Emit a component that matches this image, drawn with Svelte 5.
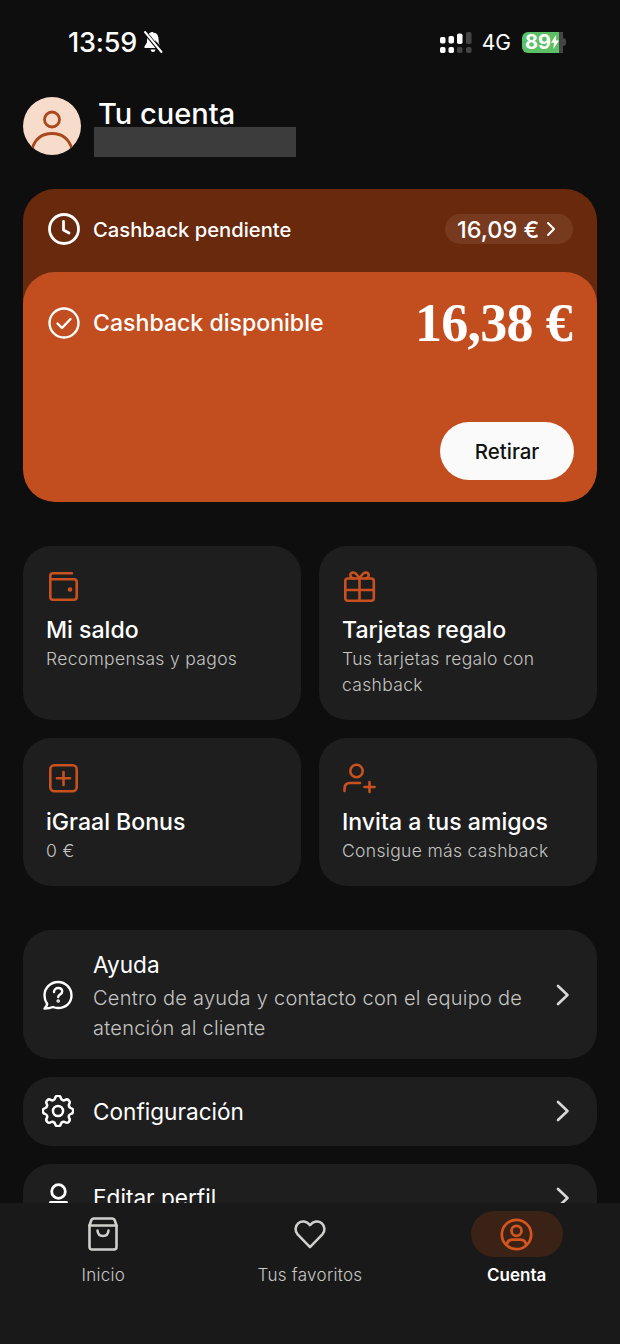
<script>
  const tiles = [
    { icon: 'wallet', title: 'Mi saldo', sub: 'Recompensas y pagos' },
    { icon: 'gift', title: 'Tarjetas regalo', sub: 'Tus tarjetas regalo con cashback' },
    { icon: 'bonus', title: 'iGraal Bonus', sub: '0 €' },
    { icon: 'invite', title: 'Invita a tus amigos', sub: 'Consigue más cashback' }
  ];
  const signal = [
    { x: 0, top: 5, end: 11.500, on: true, low: true },
    { x: 8.5, top: 4, end: 11.500, on: true, low: true },
    { x: 17, top: 1.500, end: 12, on: true, low: false },
    { x: 26, top: 0, end: 12, on: false, low: false }
  ];
</script>

{#snippet chevron()}
  <svg class="chev" width="16" height="24" viewBox="0 0 16 24" fill="none" stroke="#d8d8d6" stroke-width="2.6" stroke-linecap="round" stroke-linejoin="round"><path d="M3 3l9.5 9L3 21" /></svg>
{/snippet}

<div class="screen">
  <div class="scroll">
    <div class="status">
      <div class="status-left">
        <span class="time">13:59</span>
        <svg width="22" height="24" viewBox="0 0 22 24" fill="#fff"><path d="M11 2c-3.6 0-5.600 2.600-5.800 6l-.3 4.500L2.400 16.800c-.3.600 0 1.200.7 1.200H15z" /><path d="M8.500 19.500h5c-.3 1.700-1.300 2.500-2.500 2.500s-2.200-.8-2.500-2.500z" /><path d="M16.500 8.500l.4 5 1.500 2.500L8 4.500c1-1.200 4-2.500 6.200-1 1.500 1 2.200 3 2.300 5z" /><path d="M2.500 1.800l17 20.400" stroke="#0e0e0e" stroke-width="4" /><path d="M3 2l16.500 20" stroke="#fff" stroke-width="2" stroke-linecap="round" /></svg>
      </div>
      <div class="status-right">
        <svg width="32" height="21" viewBox="0 0 32 21">
          {#each signal as s}
            <rect x={s.x} y={s.top} width="5.500" height={s.end - s.top} rx="1.800" fill={s.on ? '#fff' : '#444'} />
            <rect x={s.x} y="15" width="5.500" height="6" rx="1.800" fill={s.low ? '#fff' : '#444'} />
          {/each}
        </svg>
        <span class="net">4G</span>
        <div class="battery">
          <div class="battery-body"><span>89</span><svg width="10" height="16" viewBox="0 0 10 18" fill="#fff"><path d="M6.500 0L0 10h3.800L2.800 18 10 7H6z" /></svg></div>
          <div class="battery-tip"></div>
        </div>
      </div>
    </div>

    <div class="header">
      <div class="avatar">
        <svg width="58" height="58" viewBox="0 0 58 58" fill="none" stroke="#a9481c" stroke-width="2.800"><circle cx="29" cy="22.500" r="7.500" /><path d="M9 52c3-10 10-15.500 20-15.500S46 42 49 52" /></svg>
      </div>
      <h1>Tu cuenta</h1>
      <div class="redacted"></div>
    </div>

    <div class="cashback">
      <div class="pending">
        <svg width="32" height="32" viewBox="0 0 32 32" fill="none" stroke="#fff" stroke-width="2.800" stroke-linecap="round" stroke-linejoin="round"><circle cx="16" cy="16" r="14.500" /><path d="M15.500 8.500v8.500l5.500 3" /></svg>
        <span class="cash-label">Cashback pendiente</span>
        <div class="pill">16,09 €
          <svg width="12" height="16" viewBox="0 0 12 16" fill="none" stroke="#fff" stroke-width="2" stroke-linecap="round" stroke-linejoin="round"><path d="M3 2l6 6-6 6" /></svg>
        </div>
      </div>
      <div class="available">
        <div class="available-row">
          <svg width="32" height="32" viewBox="0 0 32 32" fill="none" stroke="#fff" stroke-width="2.400" stroke-linecap="round" stroke-linejoin="round"><circle cx="16" cy="16" r="14.500" /><path d="M9.500 16.500l4.500 4.500 8.500-9" /></svg>
          <span class="cash-label big">Cashback disponible</span>
          <span class="amount">16,38 €</span>
        </div>
        <button class="withdraw">Retirar</button>
      </div>
    </div>

    <div class="tiles">
      {#each tiles as t}
        <div class="tile">
          <svg class="tile-icon" width="34" height="34" viewBox="0 0 34 34" fill="none" stroke="#c9511f" stroke-width="2.600" stroke-linecap="round" stroke-linejoin="round">
            {#if t.icon === 'wallet'}
              <path d="M26 3.300H7c-1.700 0-2.700 1-2.700 2.700v21c0 1.700 1 2.700 2.700 2.700h21c1.700 0 2.700-1 2.700-2.700V12c0-1.700-1-2.700-2.700-2.700H4.300" />
              <circle cx="24" cy="19.500" r="1" fill="#c9511f" />
            {:else if t.icon === 'gift'}
              <rect x="3.300" y="8.500" width="28.500" height="22.300" rx="2.500" />
              <path d="M3.300 20h28.500M17.500 8.500v22.300" />
              <path d="M17.500 8.500c-2-3-3.500-6-6.200-6-2 0-3.300 1.500-2.900 3.200.4 1.800 1.800 2.800 3.600 2.800M17.500 8.500c2-3 3.500-6 6.200-6 2 0 3.300 1.500 2.900 3.200-.4 1.800-1.800 2.800-3.600 2.800" />
            {:else if t.icon === 'bonus'}
              <rect x="4.300" y="3.300" width="26.400" height="26" rx="4" />
              <path d="M17.500 10v13M11 16.300h13" />
            {:else}
              <circle cx="14.500" cy="9" r="6.200" />
              <path d="M2.500 29v-2c0-3.800 2.200-6 5.500-6h10M22.500 25h10M27.500 20v10" />
            {/if}
          </svg>
          <div class="tile-title">{t.title}</div>
          <div class="tile-sub">{t.sub}</div>
        </div>
      {/each}
    </div>

    <div class="list">
      <div class="row tall">
        <svg class="row-icon" width="32" height="30" viewBox="0 0 30 30" fill="none" stroke="#fff" stroke-width="2.400" stroke-linecap="round" stroke-linejoin="round"><path d="M1.500 28.500c1.500-1.500 2.500-3 2.700-4.500C2.500 21.500 1.500 18.500 1.500 15.500 1.500 8 7.500 2 15 2s13.500 6 13.500 13.500S22.500 28 15 28c-2 0-3.500-.3-5-1-2.500 1-5.500 1.500-8.500 1.500z" /><path d="M11 12c0-2.500 2-4 4.200-4 2.400 0 4 1.500 4 3.500 0 3-4 3-4 5.500" /><circle cx="15.200" cy="21" r=".6" fill="#fff" /></svg>
        <div class="row-text">
          <div class="row-title">Ayuda</div>
          <div class="row-sub">Centro de ayuda y contacto con el equipo de atención al cliente</div>
        </div>
        {@render chevron()}
      </div>
      <div class="row">
        <svg class="row-icon" width="32" height="32" viewBox="2.500 2.500 19 19" fill="none" stroke="#fff" stroke-width="1.500" stroke-linecap="round" stroke-linejoin="round"><path d="M10.300 4.300c.4-1.800 3-1.800 3.400 0a1.700 1.700 0 0 0 2.600 1.100c1.500-.9 3.300.8 2.400 2.400a1.700 1.700 0 0 0 1 2.500c1.800.4 1.800 3 0 3.400a1.700 1.700 0 0 0-1 2.600c.9 1.500-.9 3.300-2.400 2.400a1.700 1.700 0 0 0-2.600 1c-.4 1.800-3 1.800-3.400 0a1.700 1.700 0 0 0-2.600-1c-1.500.9-3.300-.9-2.400-2.400a1.700 1.700 0 0 0-1-2.600c-1.800-.4-1.800-3 0-3.400a1.700 1.700 0 0 0 1-2.500c-.9-1.600.9-3.300 2.400-2.400a1.700 1.700 0 0 0 2.600-1.100z" /><circle cx="12" cy="12" r="3" /></svg>
        <div class="row-text"><div class="row-title">Configuración</div></div>
        {@render chevron()}
      </div>
      <div class="row">
        <svg class="row-icon" width="32" height="32" viewBox="0 0 32 32" fill="none" stroke="#fff" stroke-width="2.800" stroke-linecap="round"><circle cx="16.500" cy="9.500" r="6.800" /><path d="M8.500 20.500h16" /></svg>
        <div class="row-text"><div class="row-title">Editar perfil</div></div>
        {@render chevron()}
      </div>
    </div>
  </div>

  <nav class="tabbar">
    <div class="tab">
      <div class="tab-icon">
        <svg width="30" height="34" viewBox="0 0 30 34" fill="none" stroke="#cfcfcc" stroke-width="2.600" stroke-linecap="round" stroke-linejoin="round"><path d="M6 1.500h18c1.500 0 2.300.7 2.800 2l1.700 5V30c0 1.600-1 2.500-2.500 2.500H4c-1.500 0-2.500-.9-2.500-2.500V8.500l1.700-5c.5-1.300 1.300-2 2.800-2z" /><path d="M1.500 8.500h27" /><path d="M9.500 13.500c.3 3.500 2.500 5.500 5.500 5.500s5.200-2 5.500-5.500" /></svg>
      </div>
      <span>Inicio</span>
    </div>
    <div class="tab">
      <div class="tab-icon">
        <svg width="34" height="30" viewBox="0 0 34 32" fill="none" stroke="#cfcfcc" stroke-width="2.700" stroke-linecap="round" stroke-linejoin="round"><path d="M17 30L3.800 16.500C.6 13 1 7.500 4.500 4.500c3.700-3 8.800-2.400 12.500 2 3.700-4.400 8.800-5 12.500-2 3.500 3 3.900 8.500.7 12z" /></svg>
      </div>
      <span>Tus favoritos</span>
    </div>
    <div class="tab active">
      <div class="tab-icon">
        <svg width="33" height="33" viewBox="0 0 36 36" fill="none" stroke="#d4561f" stroke-width="3" stroke-linecap="round"><circle cx="18" cy="18" r="16" /><circle cx="18" cy="14" r="5.500" /><path d="M7.500 29c.5-3.500 3-5.500 6.500-5.500h8c3.500 0 6 2 6.500 5.500" /></svg>
      </div>
      <span>Cuenta</span>
    </div>
  </nav>
</div>

<style>
  :global(body) {
    margin: 0;
    background: #0e0e0e;
  }

  .screen {
    width: 620px;
    height: 1344px;
    display: flex;
    flex-direction: column;
    overflow: hidden;
    background: #0e0e0e;
    color: #fff;
    font-family: Inter, "Liberation Sans", sans-serif;
  }

  .scroll {
    flex: 1;
    min-height: 0;
    overflow: hidden;
    padding: 0 23px;
  }

  .status {
    height: 84px;
    display: flex;
    justify-content: space-between;
    align-items: center;
    padding: 0 31px 0 45px;
  }

  .status-left,
  .status-right {
    display: flex;
    align-items: center;
  }

  .status-left {
    gap: 5px;
  }

  .time {
    font-size: 27px;
    font-weight: 500;
    letter-spacing: -0.2px;
  }

  .status-right svg {
    display: block;
  }

  .net {
    font-size: 21px;
    margin: 0 11px 0 10px;
  }

  .battery {
    display: flex;
    align-items: center;
    gap: 0;
  }

  .battery-body {
    width: 41px;
    height: 21px;
    border-radius: 6px 0 0 6px;
    background: #5cc066;
    font-size: 20px;
    font-weight: 700;
    display: flex;
    align-items: center;
    padding-left: 3px;
    box-sizing: border-box;
    border-right: 4px solid #444;
  }

  .battery-tip {
    width: 3px;
    height: 8px;
    border-radius: 0 3px 3px 0;
    background: #444;
  }

  .header {
    position: relative;
    height: 58px;
    margin-top: 13px;
    display: flex;
    gap: 17px;
  }

  .avatar {
    width: 58px;
    height: 58px;
    border-radius: 50%;
    background: #f8dccb;
    overflow: hidden;
  }

  .avatar svg {
    display: block;
  }

  h1 {
    margin: 0;
    font-size: 29px;
    line-height: 34px;
    font-weight: 500;
  }

  .redacted {
    position: absolute;
    left: 71px;
    top: 30px;
    width: 202px;
    height: 30px;
    background: #3c3c3c;
  }

  .cashback {
    margin-top: 34px;
    height: 313px;
    border-radius: 32px;
    overflow: hidden;
    background: #68290d;
    display: flex;
    flex-direction: column;
  }

  .pending {
    height: 83px;
    padding: 0 24px 3px 25px;
    box-sizing: border-box;
    display: flex;
    align-items: center;
    gap: 13px;
  }

  .cash-label {
    font-size: 20.200px;
    font-weight: 550;
  }

  .cash-label.big {
    font-size: 23.100px;
  }

  .pill {
    margin-left: auto;
    height: 30px;
    width: 128px;
    box-sizing: border-box;
    padding-left: 12px;
    gap: 6px;
    border-radius: 15px;
    background: #773a1e;
    font-size: 23.500px;
    font-weight: 500;
    display: flex;
    align-items: center;
  }

  .available {
    flex: 1;
    border-radius: 32px;
    background: #c24e20;
    padding: 26px 23px 22px 25px;
    display: flex;
    flex-direction: column;
    justify-content: space-between;
    align-items: flex-end;
  }

  .available-row {
    align-self: stretch;
    display: flex;
    align-items: center;
    gap: 13px;
  }

  .amount {
    margin-left: auto;
    margin-right: 2px;
    font-family: "Liberation Serif", serif;
    font-size: 54px;
    line-height: 50px;
    font-weight: 700;
    letter-spacing: -0.7px;
  }

  .withdraw {
    width: 134px;
    height: 58px;
    border: 0;
    border-radius: 29px;
    background: #fafafa;
    color: #111;
    font: 500 20.500px Inter, sans-serif;
  }

  .tiles {
    margin-top: 44px;
    display: grid;
    grid-template-columns: 278px 278px;
    grid-template-rows: 174px 148px;
    gap: 18px;
  }

  .tile {
    border-radius: 28px;
    background: #1e1e1e;
    padding: 24px 23px 0;
    box-sizing: border-box;
  }

  .tile-icon {
    display: block;
    margin-bottom: 10px;
    overflow: visible;
  }

  .tile-title {
    font-size: 23.100px;
    line-height: 32px;
    font-weight: 550;
  }

  .tile-sub {
    font-size: 17.500px;
    line-height: 26px;
    font-weight: 300;
    letter-spacing: 0.33px;
    color: #c4c4c2;
  }

  .list {
    margin-top: 44px;
    display: flex;
    flex-direction: column;
    gap: 18px;
  }

  .row {
    height: 68.500px;
    border-radius: 28px;
    background: #1e1e1e;
    display: flex;
    align-items: center;
    padding: 0 26px 0 19px;
    flex-shrink: 0;
    gap: 19px;
  }

  .row.tall {
    height: 129px;
  }

  .tall .row-text {
    padding-top: 4px;
  }

  .row-icon {
    flex: none;
  }

  .row-text {
    flex: 1;
    padding-top: 1px;
  }

  .row-title {
    font-size: 22.600px;
    line-height: 30px;
    font-weight: 400;
  }

  .row-sub {
    margin-top: 3px;
    font-size: 20px;
    line-height: 30px;
    font-weight: 300;
    letter-spacing: 0.25px;
    color: #c4c4c2;
  }

  .chev {
    flex: none;
    margin-left: 8px;
  }

  .tabbar {
    position: relative;
    height: 141px;
    flex: none;
    background: #191919;
    display: grid;
    grid-template-columns: repeat(3, 1fr);
    padding-top: 8px;
    box-sizing: border-box;
  }

  .tab {
    display: flex;
    flex-direction: column;
    align-items: center;
    font-size: 17px;
    font-weight: 300;
    color: #c8c8c6;
    letter-spacing: 0.3px;
  }

  .tab-icon {
    width: 92px;
    height: 46px;
    border-radius: 23px;
    display: flex;
    align-items: center;
    justify-content: center;
    margin-bottom: 8px;
  }

  .active {
    color: #fff;
    font-weight: 600;
    letter-spacing: 0;
  }

  .active .tab-icon {
    background: #3a2216;
  }
</style>
